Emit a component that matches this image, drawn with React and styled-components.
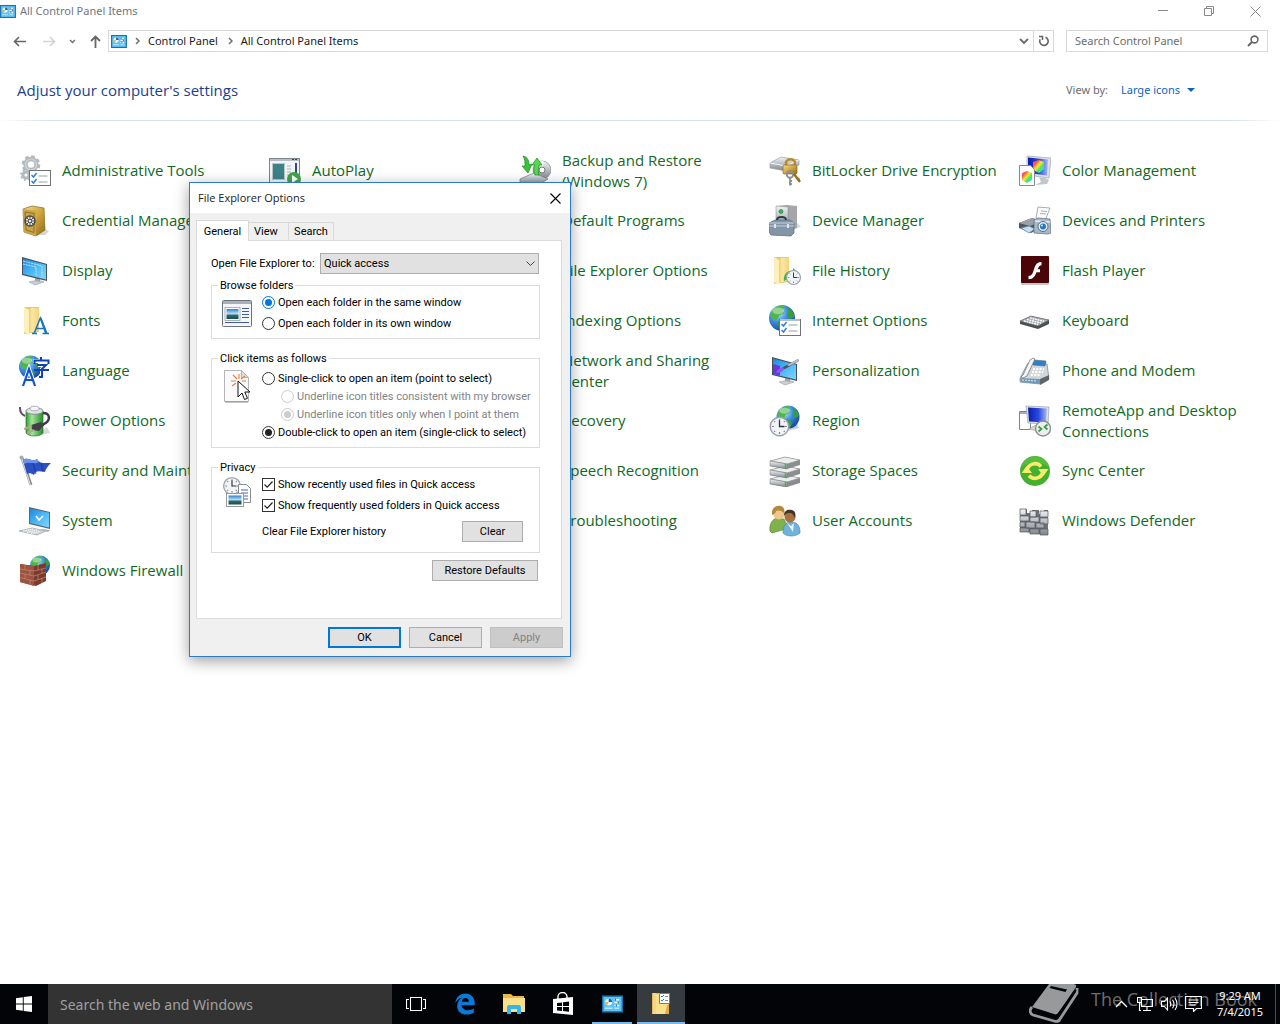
import React from "react";
import styled, { createGlobalStyle, css } from "styled-components";

const ui = `"Open Sans", "Noto Sans", sans-serif`;
const small = `"Noto Sans", "Open Sans", sans-serif`;
const classic = `Roboto, "Liberation Sans", Arial, sans-serif`;

const GlobalStyle = createGlobalStyle`
  *, *::before, *::after { box-sizing: border-box; }
  html, body { margin: 0; background: #fff; }
  body { font-family: ${ui}; font-size: 12px; line-height: 16px; color: #000; }
  button, input, select { font: inherit; color: inherit; margin: 0; }
  svg { display: block; flex: none; }
`;

/* ---------- shared gradients ---------- */

const HiddenSvg = styled.svg`
  position: absolute;
`;

const stops = (list) => list.map(([o, c]) => <stop key={o} offset={o} stopColor={c} />);

const Gradients = () => (
  <HiddenSvg width="0" height="0" aria-hidden="true">
    <defs>
      <radialGradient id="ocean" cx=".35" cy=".3" r=".8">
        {stops([[0, "#bfe6ff"], [0.45, "#3d8fe0"], [1, "#123a94"]])}
      </radialGradient>
      <linearGradient id="screen" x1="0" y1="0" x2="1" y2="1">
        {stops([[0, "#1d86dc"], [0.5, "#4bb8f6"], [1, "#7fd6ff"]])}
      </linearGradient>
      <linearGradient id="folder" x1="0" y1="0" x2="1" y2="0">
        {stops([[0, "#f0cd6a"], [0.3, "#fbe7a4"], [1, "#f3d679"]])}
      </linearGradient>
      <linearGradient id="steel" x1="0" y1="0" x2="0" y2="1">
        {stops([[0, "#f2f3f5"], [0.5, "#b9bdc3"], [1, "#7f848b"]])}
      </linearGradient>
      <linearGradient id="gold" x1="0" y1="0" x2="1" y2="1">
        {stops([[0, "#f3dc8b"], [0.5, "#cfa53c"], [1, "#8f6a1c"]])}
      </linearGradient>
      <linearGradient id="navy" x1="0" y1="0" x2="1" y2="0">
        {stops([[0, "#0a1ea8"], [0.55, "#2b49e0"], [1, "#a9b8f5"]])}
      </linearGradient>
      <linearGradient id="battery" x1="0" y1="0" x2="1" y2="0">
        {stops([[0, "#2f9a35"], [0.35, "#a4e69a"], [1, "#2b8a2f"]])}
      </linearGradient>
      <linearGradient id="rainbow" x1="0" y1="0" x2="1" y2="1">
        {stops([[0, "#ff3bd4"], [0.25, "#ff5a3a"], [0.45, "#ffe93a"], [0.65, "#45e65b"], [0.85, "#36d8ff"], [1, "#4a55ff"]])}
      </linearGradient>
      <linearGradient id="photo" x1="0" y1="0" x2="0" y2="1">
        {stops([[0, "#2e7fd0"], [0.5, "#bfe4f7"], [0.6, "#2d6f6a"], [1, "#1c4b52"]])}
      </linearGradient>
    </defs>
  </HiddenSvg>
);

/* ---------- drawing parts ---------- */

const Art = ({ children }) => (
  <svg width="32" height="32" viewBox="0 0 32 32" aria-hidden="true">{children}</svg>
);

const Globe = ({ cx, cy, r }) => (
  <g transform={`translate(${cx} ${cy}) scale(${r / 10})`}>
    <circle r="10" fill="url(#ocean)" />
    <path d="M-8.500-4C-6-9-1-10 2-9L0-6l2 2-4 2-2 4-3-1-2-3z" fill="#4fb648" />
    <path d="M4-8c3 1 5 4 5.500 7L6 1 4-2l1-3zM-4 3l4-1 4 3-2 4-3 0.800z" fill="#3a9d3c" />
    <ellipse cx="-3" cy="-5.500" rx="4.500" ry="2.600" fill="#fff" opacity=".4" />
  </g>
);

const Clock = ({ cx, cy, r }) => (
  <g transform={`translate(${cx} ${cy}) scale(${r / 10})`}>
    <circle r="9.300" fill="#f1f4f6" stroke="#9aa2a9" strokeWidth="1.500" />
    <path d="M0-7.500v2M0 5.500v2M-7.500 0h2M5.500 0h2M-5.300-5.300l1 1M5.300-5.300l-1 1M-5.300 5.300l1-1M5.300 5.300l-1-1" stroke="#7f8890" strokeWidth="1.200" />
    <path d="M0-6V0H5" fill="none" stroke="#2e353b" strokeWidth="1.300" />
  </g>
);

const FolderShape = () => (
  <g>
    <path d="M5 2h15v25l-15 2z" fill="#ecc867" />
    <path d="M5 2l5 3v25l-5-3z" fill="#fdf0bd" />
    <path d="M10 5l2-2h8v22l-3 1-7 2z" fill="url(#folder)" />
  </g>
);

const CheckList = ({ x, y, w, h }) => (
  <g>
    <rect x={x} y={y} width={w} height={h} fill="#fff" stroke="#6f7276" />
    <path d={`M${x + 2} ${y + 4.500}l2 2 3-4M${x + 2} ${y + 10.500}l2 2 3-4`} fill="none" stroke="#2f7fd6" strokeWidth="1.500" />
    <path d={`M${x + 9} ${y + 5.500}h${w - 12}M${x + 9} ${y + 11.500}h${w - 12}`} stroke="#9aa0a6" />
  </g>
);

const TiltedMonitor = ({ fill = "url(#screen)", children }) => (
  <g>
    <path d="M10 27l9-2 6 2-9 3z" fill="#c9ced3" stroke="#9aa0a6" strokeWidth=".6" />
    <path d="M16 22l5 1v4l-5-1z" fill="#a3a9af" />
    <path d="M3 2l25 7v17L3 20z" fill="#44505a" />
    <path d="M4 3.500l23 6.300v14.700L4 19z" fill={fill} />
    {children}
  </g>
);

/* ---------- control panel icons ---------- */

const AdminToolsIcon = () => (
  <Art>
    <g fill="none" stroke="#b4b9bf">
      <circle cx="12" cy="9.500" r="5.500" strokeWidth="4.400" />
      <circle cx="12" cy="9.500" r="8" strokeWidth="2.600" strokeDasharray="3.600 2.680" />
      <circle cx="7" cy="20" r="3" strokeWidth="3" />
      <circle cx="7" cy="20" r="5" strokeWidth="1.800" strokeDasharray="2 1.930" />
    </g>
    <circle cx="12" cy="9.500" r="5.500" fill="none" stroke="#d5d9dc" strokeWidth="1.200" />
    <CheckList x={10.5} y={15.500} w={21} h={15} />
  </Art>
);

const AutoPlayIcon = () => (
  <Art>
    <rect x=".5" y="3.500" width="30" height="26" fill="#f3f4f6" stroke="#7d848d" />
    <path d="M1 5h29" stroke="#b6bec8" strokeWidth="2" />
    <path d="M23 4.500h2M26 4.500h2" stroke="#444" />
    <rect x="3.500" y="8.500" width="12" height="16" fill="#3c8286" stroke="#b9c6cf" />
    <path d="M18 11h4M18 14h4M18 17h4M18 20h4" stroke="#a9b4c0" />
    <path d="M27 8v10" stroke="#2d4a86" strokeWidth="2" />
    <circle cx="25" cy="24" r="7" fill="#44a548" />
    <path d="M23 20l6 4-6 4z" fill="#fff" />
  </Art>
);

const BackupIcon = () => (
  <Art>
    <circle cx="23" cy="15" r="9" fill="url(#steel)" stroke="#85898f" strokeWidth=".7" />
    <path d="M23 15l-3-8.500a9 9 0 0 1 5-.300z" fill="#fff" opacity=".8" />
    <circle cx="23" cy="15" r="3" fill="#fff" stroke="#777" />
    <path d="M1 24l14-6 14 6-10 6H1z" fill="url(#steel)" stroke="#777c83" strokeWidth=".7" />
    <path d="M4 1c5 1 6 5 6 9l3-1-4 9-6-7h3c0-4 0-7-2-10z" fill="#3bc13c" stroke="#1b8a22" strokeWidth=".7" />
    <path d="M16 20c-2-5-1-8 0-10h-3l5-7 5 7h-3c-1 4-1 6 0 10z" fill="#56d94f" stroke="#1b8a22" strokeWidth=".7" />
  </Art>
);

const BitLockerIcon = () => (
  <Art>
    <path d="M1 8L12 2l18 3v5l-13 6L1 13z" fill="url(#steel)" stroke="#9b9fa4" strokeWidth=".7" />
    <path d="M1 8l16 3 13-6" fill="none" stroke="#f6f6f6" />
    <path d="M17 11V7a5 5 0 0 1 9 0v4" fill="none" stroke="#b88d26" strokeWidth="2.400" />
    <rect x="14" y="10" width="14" height="9" rx="1.500" fill="url(#gold)" stroke="#8f6a1c" strokeWidth=".7" />
    <circle cx="21" cy="19.500" r="3.200" fill="none" stroke="#8b8f94" strokeWidth="2" />
    <path d="M21 22v8.500M21 26h2M21 29h2" stroke="#8b8f94" strokeWidth="1.800" />
    <path d="M25 19l6 8M28 25l2.500-1.500" stroke="#98701a" strokeWidth="2.400" />
  </Art>
);

const ColorIcon = () => (
  <Art>
    <path d="M8 1l24 2-2 20-22-3z" fill="#dde1e5" stroke="#a4a9ae" strokeWidth=".7" />
    <path d="M9 2.500l20 2-1 16L9 18z" fill="url(#navy)" />
    <path d="M20 22l2 5-6 3 12-1 2-4-4-2z" fill="#c2c6ca" />
    <path d="M14 7l6-2 5 2v7l-5 4-6-3z" fill="url(#rainbow)" />
    <path d="M.5 10.500h11l4 4v16H.5z" fill="#fff" stroke="#85898e" />
    <path d="M3 18l5-2 5 2v7l-5 3-5-3z" fill="url(#rainbow)" />
  </Art>
);

const CredentialIcon = () => (
  <Art>
    <path d="M12 30l14 0 4-4-4-2z" fill="#d9d6cf" />
    <path d="M4 4l9-3 12 2 1 22-9 6L5 27z" fill="url(#gold)" stroke="#86651d" strokeWidth=".7" />
    <path d="M4 4l13 2v25L5 27z" fill="#c9a54a" />
    <path d="M6 7l9 1.500v19L7 25z" fill="none" stroke="#8f6f27" />
    <circle cx="11" cy="16" r="5" fill="#e3e3e3" stroke="#4a4a4a" strokeWidth="1.600" />
    <path d="M11 11v10M6 16h10M7.500 12.500l7 7M14.500 12.500l-7 7" stroke="#444" strokeWidth=".9" />
    <circle cx="11" cy="16" r="1.600" fill="#fff" stroke="#444" strokeWidth=".8" />
  </Art>
);

const DisplayIcon = () => (
  <Art>
    <TiltedMonitor>
      <path d="M4 9l13 3v9M4 6l19 5v12" fill="none" stroke="#c9efff" strokeWidth=".9" strokeDasharray="2 .8" />
    </TiltedMonitor>
  </Art>
);

const DeviceManagerIcon = () => (
  <Art>
    <path d="M24 24l8-2-4-4z" fill="#d9dadb" />
    <path d="M7 1l11-1 10 1v22l-9 3-12-1z" fill="#a3a6aa" />
    <path d="M7 1l12 1v23L7 24z" fill="url(#steel)" stroke="#888" strokeWidth=".5" />
    <circle cx="12" cy="6.500" r="2" fill="#39b54a" stroke="#1b7d2a" strokeWidth=".6" />
    <path d="M0 18l6-3h15l4 3v10l-3 3-20-1-2-3z" fill="#8296a8" stroke="#55687a" strokeWidth=".7" />
    <path d="M0 18h25M0 21h25" stroke="#c5d2dd" />
    <path d="M8 15c0-4 9-4 9 0" fill="none" stroke="#2f3b46" strokeWidth="2" />
    <path d="M6 19v4M19 19v4" stroke="#dfe7ee" strokeWidth="2" />
  </Art>
);

const DevicesIcon = () => (
  <Art>
    <path d="M19 2l12 1-5 13-9-3z" fill="#fbfbfb" stroke="#93989d" strokeWidth=".8" />
    <path d="M22 6l6 .5M21 8.500l6 .5" stroke="#a9aeb3" />
    <path d="M0 18l13-5 10 3v6L12 28 0 23z" fill="#50555b" />
    <path d="M0 18l13-5 10 3-12 5z" fill="#9aa0a6" />
    <path d="M2 23l8-2 6 3-6 4z" fill="#c4dff2" stroke="#5c84a6" strokeWidth=".7" />
    <path d="M15 15l4-2 12 1 1 14-3 1-14-1z" fill="#a8b8c9" stroke="#5d6b7b" strokeWidth=".7" />
    <path d="M16 16l15 1" stroke="#e6edf4" strokeWidth="1.500" />
    <circle cx="24" cy="21.500" r="5" fill="#e8eef4" stroke="#5b6d83" />
    <circle cx="24" cy="21.500" r="3" fill="#2476c8" />
    <circle cx="23" cy="20.500" r="1" fill="#d4ecff" />
  </Art>
);

const FileHistoryIcon = () => (
  <Art>
    <FolderShape />
    <path d="M15 26c-1-6 3-11 9-10v-3l6 5" fill="#45b549" />
    <Clock cx={24.5} cy={22.500} r={7.500} />
  </Art>
);

const FlashIcon = () => (
  <Art>
    <rect x="2" y="2" width="28" height="28" rx="1" fill="#c9c4c4" />
    <rect x="2" y="1" width="28" height="27" rx="1" fill="#4a0508" />
    <path d="M22.500 7c-6.500 0-6.800 6-8.200 9.500C13.200 19.300 12 21 9.500 21v3.200c5 0 6.700-3.600 8-7H21v-3h-2.300c1-2.500 1.800-4 3.800-4z" fill="#fff" />
  </Art>
);

const FontsIcon = () => (
  <Art>
    <FolderShape />
    <path d="M13 28.500h5M23.500 28.500h6.500M15.300 28l6-15 6 15M17.500 23.500h7.500" fill="none" stroke="#1a74c4" strokeWidth="1.500" />
    <path d="M20.800 13.500l5 14.500h2.700l-6-15.500z" fill="#1a74c4" />
  </Art>
);

const InternetIcon = () => (
  <Art>
    <Globe cx={13} cy={13} r={13} />
    <CheckList x={10.5} y={14.500} w={21} h={16} />
    <path d="M11 15h20" stroke="#b6bec7" strokeWidth="2" />
  </Art>
);

const KeyboardIcon = () => (
  <Art>
    <path d="M1 16L12 11l18 4v4L19 24 1 19z" fill="#4c4f53" />
    <path d="M1 16L12 11l18 4-11 6z" fill="#a9acb0" stroke="#66696d" strokeWidth=".6" />
    <path d="M5 16l14 3.500M8 14.500l14 3.500M11 13l14 3.300" stroke="#fff" strokeWidth="1.400" strokeDasharray="1.800 .8" />
  </Art>
);

const LanguageIcon = () => (
  <Art>
    <Globe cx={11.500} cy={12} r={11.500} />
    <g fill="none" stroke="#fff" strokeWidth="4"><path d="M14 6h16M19 10h8l-4 4v8" /></g>
    <path d="M22 2v3M15.500 9V5.500h14V9M18 10h9l-4 4v8h-3M15 15h15" fill="none" stroke="#0d41b8" strokeWidth="2" />
    <path d="M4 31l6-17 6 17M6 25h8" fill="none" stroke="#fff" strokeWidth="4" />
    <path d="M4 31l6-17 6 17M6 25h8" fill="none" stroke="#0d52d0" strokeWidth="2.200" />
  </Art>
);

const PersonalizationIcon = () => (
  <Art>
    <TiltedMonitor>
      <path d="M4 9l7 2v9.500L4 19z" fill="#6a35dc" />
      <path d="M10 15l4-3 15-8 1 2-14 8z" fill="#4d545b" />
      <path d="M18 10l11-6 1 2-10 5z" fill="#b9bec4" />
      <path d="M7 18c1-3 3-5 7-6l1 2c-2 3-4 4-8 4z" fill="#8a5be8" />
    </TiltedMonitor>
  </Art>
);

const PhoneIcon = () => (
  <Art>
    <path d="M1 23L9 8l19 1 2 15-9 5-20-2z" fill="#d5d8db" stroke="#878c92" strokeWidth=".8" />
    <path d="M1 23l20 1v5L2 27z" fill="#6f9ab6" />
    <path d="M3 25l14 1" stroke="#d9ecf7" strokeDasharray="2 1" />
    <path d="M21 24l9-4v5l-9 5z" fill="#5f6469" />
    <path d="M15 5l12 1-1 5-12-1z" fill="#2d80cc" stroke="#5e646a" strokeWidth=".6" />
    <path d="M4 20L11 5l3-2 2 1-8 17-4 2-2-1z" fill="#f4f5f6" stroke="#72777c" strokeWidth=".8" />
    <path d="M14 14h11M13 17h11M12 20h10" stroke="#fff" strokeWidth="1.800" strokeDasharray="2 1.300" />
  </Art>
);

const PowerIcon = () => (
  <Art>
    <path d="M17 31l14-3-3-6z" fill="#d6dbd6" />
    <path d="M7 6h17v22c-3 4-14 4-17 0z" fill="url(#battery)" stroke="#27762b" strokeWidth=".7" />
    <ellipse cx="15.500" cy="6" rx="8.500" ry="3.300" fill="#dfe3e6" stroke="#8b9094" />
    <ellipse cx="15.500" cy="3.500" rx="4.500" ry="2.300" fill="#f4f5f6" stroke="#8b9094" strokeWidth=".7" />
    <path d="M1 2c0 5 1 7 5 9" fill="none" stroke="#5f4a73" strokeWidth="2" />
    <path d="M24 8c7 0 7 6 4 9l-6 4" fill="none" stroke="#413450" strokeWidth="2.400" />
    <path d="M12 20l10-3 3 3-5 6-7-1z" fill="#3f4146" />
    <path d="M13 21l-8 3M15 25l-7 3" stroke="#b9a58a" strokeWidth="2" />
  </Art>
);

const RegionIcon = () => (
  <Art>
    <path d="M18 26l12-3-2-4z" fill="#b9cfe6" />
    <Globe cx={19} cy={12} r={11.500} />
    <Clock cx={10.5} cy={21.500} r={10} />
  </Art>
);

const RemoteAppIcon = () => (
  <Art>
    <path d="M.5 6.500h11v18H.5z" fill="#fff" stroke="#7d848d" />
    <path d="M1 8h10" stroke="#9fb0c4" strokeWidth="2" />
    <path d="M7 1l23 1-1 17-20-1z" fill="#dfe3e8" stroke="#9ba1a8" strokeWidth=".7" />
    <path d="M9 2.500l19 1-1 14-17-1z" fill="url(#navy)" />
    <path d="M10 24l7-4 5 2-4 4z" fill="#d8d6ca" stroke="#a09e92" strokeWidth=".6" />
    <circle cx="24" cy="23.500" r="7.500" fill="#eceeef" stroke="#8b9197" strokeWidth="1.400" />
    <path d="M19.500 21.500l3 2.500-3 2.500M28.500 19.500l-3 2.500 3 2.500" fill="none" stroke="#3a9d3c" strokeWidth="1.700" />
  </Art>
);

const FlagIcon = () => (
  <Art>
    <path d="M3 3l9 27" stroke="#85898f" strokeWidth="2.800" />
    <path d="M2.600 3l8.800 27" stroke="#e3e5e8" />
    <circle cx="2.500" cy="2.500" r="2" fill="#a7abb1" />
    <path d="M4 5c5-4 9 3 14-1 3 5 7 4 14 4-3 3-5 5-6 9-7-1-9-2-11 3-3-2-5-2-7-1z" fill="#2a50c4" />
    <path d="M4 5c5-4 9 3 14-1l2 3c-5 3-9-1-15 2z" fill="#6f92ec" />
    <path d="M14 8l3 11M22 8l2 8" stroke="#1b348f" strokeWidth="1.300" opacity=".6" />
  </Art>
);

const StorageIcon = () => (
  <Art>
    {[20, 11, 2].map((y) => (
      <g key={y} transform={`translate(0 ${y})`}>
        <path d="M1 4l15-4 15 3v5l-13 4-17-3z" fill="#8a8e93" />
        <path d="M1 4l15-4 15 3-13 4z" fill="#eceded" stroke="#888" strokeWidth=".6" />
        <path d="M1 4l17 3v5L1 9z" fill="url(#steel)" stroke="#777" strokeWidth=".5" />
        <path d="M16.500 7v4.500" stroke="#45b549" strokeWidth="1.600" />
      </g>
    ))}
  </Art>
);

const SyncIcon = () => (
  <Art>
    <circle cx="16" cy="16" r="15" fill="#43b02e" />
    <path d="M2 12a14.500 14.500 0 0 1 28 0c-8-6-20-6-28 0z" fill="#5cc043" opacity=".8" />
    <path d="M8 16a8 8 0 0 1 14-4.500M24 16a8 8 0 0 1-14 4.500" fill="none" stroke="#fbea6c" strokeWidth="3.600" />
    <path d="M2.500 18l5-7 5.500 7zM19 14l5.500 7 5-7z" fill="#fbea6c" />
  </Art>
);

const SystemIcon = () => (
  <Art>
    <path d="M0 26l13-3 14 3-9 4z" fill="#cfd4d9" stroke="#9ca1a6" strokeWidth=".7" />
    <path d="M4 26l10-2M8 27.500l10-2.500M12 28.500l9-2" stroke="#fff" strokeDasharray="1.500 .8" />
    <path d="M10 2l21 5v17l-21-5z" fill="#5c6770" />
    <path d="M11 3.500l19 4.300v14.700l-19-4.500z" fill="url(#screen)" />
    <path d="M17 11l3 4 4-4" fill="none" stroke="#fff" strokeWidth="1.500" />
    <path d="M23 24l8 1-2 2-8-2z" fill="#aeb4ba" />
  </Art>
);

const UsersIcon = () => (
  <Art>
    <path d="M1 26c-1-8 3-12 7-13l7 1 3 6-1 4-14 4z" fill="#7fb24a" stroke="#4f7d2b" strokeWidth=".6" />
    <circle cx="10" cy="8.500" r="6" fill="#efc68e" />
    <path d="M3 10c-1-8 5-10 9-9 3 1 4 4 3 7-3-3-6-3-8-2 0 2-2 3-4 4z" fill="#b28a3a" />
    <path d="M14 28c0-8 3-10 7-11l6 1c4 3 4 7 4 10-5 4-13 4-17 0z" fill="#6fb3dd" stroke="#3b7ca8" strokeWidth=".6" />
    <path d="M18 18l4 3 3-3-1 9z" fill="#e8f3fa" />
    <circle cx="21" cy="12" r="5.500" fill="#a9713f" />
    <path d="M15 11c0-6 4-7 8-6 3 1 4 3 3 8-2-4-3-5-6-5-2 0-4 1-5 3z" fill="#46342a" />
  </Art>
);

const DefenderIcon = () => (
  <Art>
    <path d="M1 4h7v4h5V5h7v4h5V5h4v23l-3 2-25-4z" fill="#6e7277" />
    <g fill="url(#steel)" stroke="#54585d" strokeWidth=".7">
      <path d="M1 4l6 0v6H1zM11 6h6v6h-6zM21 6h8v6h-8zM1 11h9v5H1zM11 12h9v5h-9zM21 13h8v6h-8zM1 17h5v5H1zM7 17h9v6H7zM17 18h8v5h-8zM1 23h9v4H1zM11 24h9v5h-9zM21 24h8v6h-8z" />
    </g>
  </Art>
);

const FirewallIcon = () => (
  <Art>
    <Globe cx={21} cy={10.500} r={10} />
    <path d="M1 9l14 2 12-3v18l-10 5-16-4z" fill="#7b3a2a" />
    <path d="M1 9l14 2v20L1 27z" fill="#9c5440" />
    <path d="M1 14l14 2 12-3M1 18l14 3 12-4M1 22.500l14 3.500 12-4M6 10v4.500M11 15v5M6 19v4.500M11 25v5M19 10v5M23 14v4M19 20v5M23 23v5" fill="none" stroke="#c08a76" strokeWidth=".7" />
  </Art>
);

const ClockIcon = () => (
  <Art><Clock cx={16} cy={16} r={15} /></Art>
);

const PlainFolderIcon = () => (
  <Art><FolderShape /></Art>
);

const CpGlyph = ({ width, height }) => (
  <svg width={width} height={height} viewBox="0 0 22 18" aria-hidden="true">
    <rect x=".75" y=".75" width="20.500" height="16.500" fill="#5cc3f5" stroke="#1b6fa8" strokeWidth="1.500" />
    <circle cx="7" cy="7" r="3.600" fill="#e6f6ff" />
    <path d="M7 7V3.400A3.600 3.600 0 0 1 10.600 7z" fill="#1660a5" />
    <path d="M7 7l-3.600 0a3.600 3.600 0 0 0 2 3.200z" fill="#f4a93b" />
    <path d="M13 4.500h5M13 7.500h5M13 10.500h5" stroke="#fff" strokeWidth="1.500" />
    <path d="M14 3.500v2M17 6.500v2M15 9.500v2" stroke="#1660a5" strokeWidth="1.200" />
    <path d="M3 13.500h8M13 13.500h5" stroke="#b9e6fb" strokeWidth="1.500" />
  </svg>
);

const items = [
  ["Administrative Tools", AdminToolsIcon],
  ["AutoPlay", AutoPlayIcon],
  ["Backup and Restore (Windows 7)", BackupIcon],
  ["BitLocker Drive Encryption", BitLockerIcon],
  ["Color Management", ColorIcon],
  ["Credential Manager", CredentialIcon],
  ["Date and Time", ClockIcon],
  ["Default Programs", SyncIcon],
  ["Device Manager", DeviceManagerIcon],
  ["Devices and Printers", DevicesIcon],
  ["Display", DisplayIcon],
  ["Ease of Access Center", ClockIcon],
  ["File Explorer Options", PlainFolderIcon],
  ["File History", FileHistoryIcon],
  ["Flash Player", FlashIcon],
  ["Fonts", FontsIcon],
  ["HomeGroup", PlainFolderIcon],
  ["Indexing Options", ClockIcon],
  ["Internet Options", InternetIcon],
  ["Keyboard", KeyboardIcon],
  ["Language", LanguageIcon],
  ["Mouse", KeyboardIcon],
  ["Network and Sharing Center", InternetIcon],
  ["Personalization", PersonalizationIcon],
  ["Phone and Modem", PhoneIcon],
  ["Power Options", PowerIcon],
  ["Programs and Features", StorageIcon],
  ["Recovery", SystemIcon],
  ["Region", RegionIcon],
  ["RemoteApp and Desktop Connections", RemoteAppIcon],
  ["Security and Maintenance", FlagIcon],
  ["Sound", StorageIcon],
  ["Speech Recognition", DisplayIcon],
  ["Storage Spaces", StorageIcon],
  ["Sync Center", SyncIcon],
  ["System", SystemIcon],
  ["Taskbar and Navigation", DisplayIcon],
  ["Troubleshooting", SystemIcon],
  ["User Accounts", UsersIcon],
  ["Windows Defender", DefenderIcon],
  ["Windows Firewall", FirewallIcon],
];

/* ---------- explorer window ---------- */

const Desktop = styled.div`
  position: relative;
  display: flex;
  flex-direction: column;
  min-height: 100vh;
`;

const Explorer = styled.main`
  flex: 1;
  background: #fff;
`;

const TitleBar = styled.header`
  display: flex;
  align-items: center;
  gap: 4px;
  height: 22px;
`;

const WindowTitle = styled.h1`
  flex: 1;
  margin: 0;
  font-family: ${small};
  font-size: 11px;
  font-weight: 400;
  color: #70767d;
`;

const CaptionButton = styled.button`
  display: grid;
  place-items: center;
  width: ${(p) => (p.$compact ? "30px" : "42px")};
  height: 20px;
  padding: 0;
  border: 0;
  background: transparent;
`;

const CaptionButtons = styled.div`
  display: flex;
  gap: 4px;
  padding-right: 4px;
`;

const NavRow = styled.div`
  display: flex;
  align-items: center;
  gap: 12px;
  padding: 8px 12px 8px 9px;
`;

const NavButtons = styled.nav`
  display: flex;
  align-items: center;
  gap: 10px;
  margin-right: -9px;
`;

const NavButton = styled.button`
  display: grid;
  place-items: center;
  width: ${(p) => (p.$small ? "6px" : "20px")};
  height: 20px;
  padding: 0;
  border: 0;
  background: transparent;
`;

const AddressBar = styled.div`
  flex: 1;
  display: flex;
  align-items: center;
  height: 22px;
  border: 1px solid #d9d9d9;
  padding-left: 2px;
`;

const Crumbs = styled.div`
  flex: 1;
  display: flex;
  align-items: center;
  gap: 8px;
`;

const Crumb = styled.a`
  padding-right: 2px;
  color: #1a1a1a;
  font-family: ${small};
  font-size: 11px;
  text-decoration: none;
`;

const AddressButton = styled.button`
  display: grid;
  place-items: center;
  width: 20px;
  height: 20px;
  padding: 0;
  border: 0;
  border-left: 1px solid ${(p) => (p.$divided ? "#d9d9d9" : "transparent")};
  background: transparent;
`;

const SearchBox = styled.label`
  display: flex;
  align-items: center;
  width: 202px;
  height: 22px;
  padding: 0 8px;
  border: 1px solid #d9d9d9;
`;

const SearchInput = styled.input`
  flex: 1;
  min-width: 0;
  padding: 0;
  border: 0;
  outline: 0;
  background: transparent;
  font-family: ${small};
  font-size: 11px;
  &::placeholder { color: #6d6d6d; opacity: 1; }
`;

const Heading = styled.div`
  display: flex;
  align-items: center;
  height: 60px;
  padding: 0 85px 0 17px;
`;

const HeadingText = styled.h2`
  flex: 1;
  margin: 0;
  font-size: 15px;
  font-weight: 400;
  line-height: 20px;
  color: #1c3f8c;
`;

const ViewLabel = styled.label`
  display: flex;
  align-items: center;
  gap: 13px;
  font-family: ${small};
  font-size: 11px;
  color: #6d6d6d;
`;

const ViewPicker = styled.span`
  display: flex;
  align-items: center;
  gap: 6px;
`;

const ViewSelect = styled.select`
  appearance: none;
  padding: 0;
  border: 0;
  background: transparent;
  color: #0a63be;
`;

const Divider = styled.hr`
  height: 1px;
  margin: 0 0 25px;
  border: 0;
  background: linear-gradient(90deg, #fff, #d5dfe8 4%, #d5dfe8 96%, #fff);
`;

const ItemGrid = styled.ul`
  display: grid;
  grid-template-columns: repeat(auto-fill, 230px);
  grid-auto-rows: 50px;
  column-gap: 20px;
  margin: 0;
  padding: 0 11px 0 19px;
  list-style: none;
`;

const ItemLink = styled.a`
  display: flex;
  align-items: center;
  gap: 11px;
  height: 49px;
  font-size: 15px;
  line-height: 21px;
  color: #14691f;
  text-decoration: none;
`;

/* ---------- dialog ---------- */

const Dialog = styled.section`
  position: absolute;
  top: 182px;
  left: 189px;
  width: 382px;
  border: 1px solid #2b7cc4;
  background: #f0f0f0;
  box-shadow: 0 4px 14px rgba(0, 0, 0, 0.38);
  font-family: ${classic};
  font-size: 11px;
  line-height: 13px;
`;

const DialogBar = styled.header`
  display: flex;
  align-items: center;
  justify-content: space-between;
  height: 30px;
  padding-left: 8px;
  background: #fff;
`;

const DialogTitle = styled.h2`
  margin: 0;
  font-family: ${ui};
  font-size: 11px;
  font-weight: 400;
  line-height: 16px;
  color: #222;
`;

const DialogBody = styled.div`
  padding: 7px 7px 8px 6px;
`;

const Tabs = styled.div`
  display: flex;
  align-items: flex-end;
  height: 20px;
`;

const Tab = styled.button`
  position: relative;
  width: ${(p) => p.$width};
  padding: 0 5px;
  border: 1px solid #d9d9d9;
  border-bottom: 0;
  background: #f0f0f0;
  height: 18px;
  text-align: ${(p) => p.$align || "center"};
  & + & { border-left: 0; }
  ${(p) => p.$selected && css`
    z-index: 1;
    height: 21px;
    margin-bottom: -1px;
    background: #fff;
  `}
`;

const TabPage = styled.div`
  margin-right: 1px;
  padding: 12px 21px 37px 14px;
  border: 1px solid #dcdcdc;
  background: #fff;
`;

const FieldRow = styled.label`
  display: flex;
  align-items: center;
  justify-content: space-between;
  margin-bottom: 5px;
  padding-right: 1px;
`;

const SelectWrap = styled.span`
  position: relative;
  width: 219px;
  svg { position: absolute; top: 7px; right: 4px; pointer-events: none; }
`;

const Select = styled.select`
  appearance: none;
  display: block;
  width: 100%;
  height: 21px;
  padding: 0 3px;
  border: 1px solid #adadad;
  border-radius: 0;
  background: #e1e1e1;
`;

const Group = styled.fieldset`
  min-width: 0;
  margin: 0 0 13px;
  padding: 0 10px;
  border: 1px solid #dcdcdc;
  &:last-of-type { margin-bottom: 7px; }
`;

const Legend = styled.legend`
  margin-left: -4px;
  padding: 0 2px;
`;

const GroupBody = styled.div`
  display: flex;
  align-items: flex-start;
  gap: 10px;
  padding: ${(p) => (p.$roomy ? "4px 0 6px" : "1px 0 6px")};
  > svg { margin-top: ${(p) => (p.$lowIcon ? "6px" : "0")}; }
`;

const Options = styled.div`
  flex: 1;
  display: flex;
  flex-direction: column;
  gap: ${(p) => (p.$tight ? "0" : "3px")};
`;

const Option = styled.label`
  display: flex;
  align-items: center;
  gap: 3px;
  height: 18px;
  padding-left: ${(p) => (p.$nested ? "19px" : "0")};
  color: ${(p) => (p.$muted ? "#838383" : "#000")};
  white-space: nowrap;
`;

const Radio = styled.input.attrs({ type: "radio" })`
  appearance: none;
  display: grid;
  place-items: center;
  width: 13px;
  height: 13px;
  border: 1px solid ${(p) => (p.$accent ? "#0078d7" : "#333")};
  border-radius: 50%;
  background: #fff;
  &:disabled { border-color: #ccc; }
  &:checked::after {
    content: "";
    width: 7px;
    height: 7px;
    border-radius: 50%;
    background: ${(p) => (p.$accent ? "#0078d7" : "#222")};
  }
  &:checked:disabled::after { background: #ccc; }
`;

const CheckWrap = styled.span`
  display: grid;
  > * { grid-area: 1 / 1; }
  svg { pointer-events: none; }
`;

const Check = styled.input.attrs({ type: "checkbox" })`
  appearance: none;
  width: 13px;
  height: 13px;
  border: 1px solid #333;
  background: #fff;
`;

const ClearRow = styled.div`
  display: flex;
  align-items: center;
  justify-content: space-between;
  margin: 4px 6px 4px 0;
`;

const PushButton = styled.button`
  width: ${(p) => p.$width || "73px"};
  height: 21px;
  padding: 0;
  border: ${(p) => (p.$primary ? "2px solid #0078d7" : "1px solid #adadad")};
  background: #e1e1e1;
  &:disabled { border-color: #bfbfbf; background: #ccc; color: #838383; }
`;

const RightAlign = styled.div`
  display: flex;
  justify-content: flex-end;
  padding-right: 2px;
`;

const DialogFooter = styled.footer`
  display: flex;
  justify-content: flex-end;
  gap: 8px;
  margin-top: 8px;
`;

const Checkbox = ({ children }) => (
  <Option>
    <CheckWrap>
      <Check defaultChecked />
      <svg width="13" height="13" viewBox="0 0 13 13" aria-hidden="true">
        <path d="M2.500 6.500l2.700 2.700L10.500 3.500" fill="none" stroke="#222" strokeWidth="1.200" />
      </svg>
    </CheckWrap>
    {children}
  </Option>
);

const OptionsDialog = () => (
  <Dialog role="dialog" aria-labelledby="dialog-title">
    <DialogBar>
      <DialogTitle id="dialog-title">File Explorer Options</DialogTitle>
      <CaptionButton $compact aria-label="Close dialog">
        <svg width="11" height="11" viewBox="0 0 11 11"><path d="M.5.5l10 10M10.500.5l-10 10" stroke="#000" strokeWidth="1.100" /></svg>
      </CaptionButton>
    </DialogBar>
    <DialogBody>
      <Tabs role="tablist">
        <Tab role="tab" aria-selected="true" $selected $width="53px">General</Tab>
        <Tab role="tab" $width="40px" $align="left">View</Tab>
        <Tab role="tab" $width="45px">Search</Tab>
      </Tabs>
      <TabPage role="tabpanel">
        <FieldRow>
          Open File Explorer to:
          <SelectWrap>
            <Select defaultValue="quick"><option value="quick">Quick access</option></Select>
            <svg width="9" height="7" viewBox="0 0 9 7"><path d="M.5 1.500l4 4 4-4" fill="none" stroke="#444" /></svg>
          </SelectWrap>
        </FieldRow>

        <Group>
          <Legend>Browse folders</Legend>
          <GroupBody $lowIcon>
            <svg width="30" height="30" viewBox="0 0 30 30" aria-hidden="true">
              <rect x=".5" y="1.500" width="29" height="26" rx="1" fill="#f4f5f7" stroke="#6d737b" />
              <path d="M1 3.500h28" stroke="#a9b0b9" strokeWidth="3" />
              <rect x="3" y="8.500" width="15" height="13" fill="#fff" stroke="#9aa1a9" strokeWidth=".8" />
              <rect x="4.500" y="10" width="12" height="10" fill="url(#photo)" />
              <path d="M20 9.500h7M20 12.500h7M20 15.500h7M20 18.500h7M3 23.500h24" stroke="#3e5ba6" />
            </svg>
            <Options>
              <Option><Radio name="browse" defaultChecked $accent />Open each folder in the same window</Option>
              <Option><Radio name="browse" />Open each folder in its own window</Option>
            </Options>
          </GroupBody>
        </Group>

        <Group>
          <Legend>Click items as follows</Legend>
          <GroupBody $roomy>
            <svg width="30" height="34" viewBox="0 0 30 34" aria-hidden="true">
              <path d="M2.500 1.500h17l7 7v24h-24z" fill="#fafafa" stroke="#b5b5b5" />
              <path d="M19.500 1.500v7h7z" fill="#dcdcdc" stroke="#b5b5b5" />
              <path d="M3 33h23" stroke="#8a8a8a" />
              <path d="M17 10V5M19 10l4-3M15 10l-4-4M14 12h-5M14 14l-4 3M20 12h4" stroke="#f07848" strokeWidth="1.100" />
              <path d="M16 12v16l4-4 2.500 6.500 3-1.200-2.700-6.300h5.200z" fill="#fff" stroke="#111" />
            </svg>
            <Options $tight>
              <Option><Radio name="click" />Single-click to open an item (point to select)</Option>
              <Option $nested $muted><Radio name="underline" disabled />Underline icon titles consistent with my browser</Option>
              <Option $nested $muted><Radio name="underline" disabled defaultChecked />Underline icon titles only when I point at them</Option>
              <Option><Radio name="click" defaultChecked />Double-click to open an item (single-click to select)</Option>
            </Options>
          </GroupBody>
        </Group>

        <Group>
          <Legend>Privacy</Legend>
          <GroupBody>
            <svg width="30" height="34" viewBox="0 0 30 34" aria-hidden="true">
              <Clock cx={10} cy={11} r={9} />
              <path d="M16.500 9.500h8l4 4v14h-12z" fill="#fff" stroke="#878c92" />
              <path d="M19 15h7M19 18h7M19 21h7M19 24h7" stroke="#4668b0" />
              <rect x="4.500" y="18.500" width="17" height="13" fill="#fff" stroke="#999" />
              <rect x="6.500" y="20.500" width="13" height="9" fill="url(#photo)" />
            </svg>
            <Options>
              <Checkbox>Show recently used files in Quick access</Checkbox>
              <Checkbox>Show frequently used folders in Quick access</Checkbox>
              <ClearRow>
                Clear File Explorer history
                <PushButton $width="61px">Clear</PushButton>
              </ClearRow>
            </Options>
          </GroupBody>
        </Group>

        <RightAlign><PushButton $width="106px">Restore Defaults</PushButton></RightAlign>
      </TabPage>
      <DialogFooter>
        <PushButton $primary>OK</PushButton>
        <PushButton>Cancel</PushButton>
        <PushButton disabled>Apply</PushButton>
      </DialogFooter>
    </DialogBody>
  </Dialog>
);

/* ---------- taskbar ---------- */

const Taskbar = styled.footer`
  position: relative;
  display: flex;
  height: 40px;
  background: #020408;
  color: #fff;
`;

const TaskButton = styled.button`
  position: relative;
  display: grid;
  place-items: center;
  width: 48px;
  height: 40px;
  padding: 0;
  border: 0;
  background: ${(p) => (p.$active ? "#363b40" : "transparent")};
  ${(p) => (p.$active || p.$running) && css`
    &::after {
      content: "";
      position: absolute;
      bottom: 0;
      left: ${p.$active ? "0" : "4px"};
      right: ${p.$active ? "0" : "4px"};
      height: 2px;
      background: #76b9ed;
    }
  `}
`;

const TaskSearch = styled.input`
  width: 344px;
  height: 40px;
  padding: 0 12px;
  border: 0;
  border-radius: 0;
  outline: 0;
  background: #333;
  font-family: ${small};
  font-size: 14px;
  &::placeholder { color: #a0a0a0; opacity: 1; }
`;

const TaskButtons = styled.div`
  flex: 1;
  display: flex;
  gap: 1px;
`;

const Watermark = styled.div`
  position: absolute;
  top: 0;
  right: 23px;
  display: flex;
  align-items: center;
  gap: 11px;
  height: 40px;
  font-size: 18px;
  line-height: 20px;
  color: #6c6e70;
  pointer-events: none;
`;

const WatermarkText = styled.span`
  padding-bottom: 10px;
`;

const Tray = styled.div`
  position: relative;
  display: flex;
  align-items: center;
  gap: 8px;
`;

const TrayButton = styled.button`
  display: grid;
  place-items: center;
  width: 16px;
  height: 40px;
  padding: 0;
  border: 0;
  background: transparent;
`;

const TrayClock = styled.time`
  width: 62px;
  margin-right: 4px;
  font-family: ${small};
  font-size: 11px;
  line-height: 16px;
  text-align: center;
`;

const ShowDesktop = styled.button`
  width: 5px;
  height: 40px;
  margin-left: -8px;
  padding: 0;
  border: 0;
  border-left: 1px solid #4a4c4e;
  background: transparent;
`;

const Chevron = ({ color = "#6d6d6d", d = "M1 1l3 3-3 3", w = 5, h = 8, stroke = 1.5 }) => (
  <svg width={w} height={h} viewBox={`0 0 ${w} ${h}`} aria-hidden="true">
    <path d={d} fill="none" stroke={color} strokeWidth={stroke} />
  </svg>
);

export default function App() {
  return (
    <Desktop>
      <GlobalStyle />
      <Gradients />
      <Explorer>
        <TitleBar>
          <CpGlyph width={16} height={13} />
          <WindowTitle>All Control Panel Items</WindowTitle>
          <CaptionButtons>
            <CaptionButton aria-label="Minimize">
              <svg width="10" height="10" viewBox="0 0 10 10"><path d="M0 4.500h10" stroke="#888" /></svg>
            </CaptionButton>
            <CaptionButton aria-label="Restore">
              <svg width="10" height="10" viewBox="0 0 10 10"><path d="M.5 2.500h7v7h-7zM2.500 2.500v-2h7v7h-2" fill="none" stroke="#888" /></svg>
            </CaptionButton>
            <CaptionButton aria-label="Close">
              <svg width="11" height="11" viewBox="0 0 11 11"><path d="M.5.5l10 10M10.500.5l-10 10" stroke="#888" /></svg>
            </CaptionButton>
          </CaptionButtons>
        </TitleBar>

        <NavRow>
          <NavButtons aria-label="History">
            <NavButton aria-label="Back">
              <svg width="13" height="11" viewBox="0 0 13 11"><path d="M13 5.500H1.500M6 1L1.500 5.500 6 10" fill="none" stroke="#666" strokeWidth="1.600" /></svg>
            </NavButton>
            <NavButton aria-label="Forward">
              <svg width="13" height="11" viewBox="0 0 13 11"><path d="M0 5.500h11.500M7 1l4.500 4.500L7 10" fill="none" stroke="#d3d3d3" strokeWidth="1.600" /></svg>
            </NavButton>
            <NavButton $small aria-label="Recent locations">
              <Chevron w={7} h={5} d="M1 1l2.500 2.500L6 1" stroke={1.400} />
            </NavButton>
            <NavButton aria-label="Up">
              <svg width="11" height="13" viewBox="0 0 11 13"><path d="M5.500 13V1.500M1 6l4.500-4.500L10 6" fill="none" stroke="#666" strokeWidth="1.800" /></svg>
            </NavButton>
          </NavButtons>
          <AddressBar>
            <Crumbs>
              <CpGlyph width={16} height={13} />
              <Chevron />
              <Crumb href="#control-panel">Control Panel</Crumb>
              <Chevron />
              <Crumb href="#all-items">All Control Panel Items</Crumb>
            </Crumbs>
            <AddressButton aria-label="Previous locations">
              <Chevron w={10} h={7} d="M1 1l4 4 4-4" stroke={1.900} />
            </AddressButton>
            <AddressButton $divided aria-label="Refresh">
              <svg width="11" height="12" viewBox="0 0 11 12"><path d="M7.500 2.300A4.200 4.200 0 1 1 2.200 4.300M1 1.500h3.500V5" fill="none" stroke="#666" strokeWidth="1.600" /></svg>
            </AddressButton>
          </AddressBar>
          <SearchBox>
            <SearchInput type="search" placeholder="Search Control Panel" aria-label="Search Control Panel" />
            <svg width="12" height="12" viewBox="0 0 12 12"><circle cx="7.500" cy="4.500" r="3.400" fill="none" stroke="#666" strokeWidth="1.600" /><path d="M5 7L1 11" stroke="#666" strokeWidth="2" /></svg>
          </SearchBox>
        </NavRow>

        <Heading>
          <HeadingText>Adjust your computer's settings</HeadingText>
          <ViewLabel>
            View by:
            <ViewPicker>
              <ViewSelect defaultValue="large"><option value="large">Large icons</option></ViewSelect>
              <svg width="8" height="4" viewBox="0 0 8 4"><path d="M0 0h8L4 4z" fill="#0a63be" /></svg>
            </ViewPicker>
          </ViewLabel>
        </Heading>
        <Divider />

        <ItemGrid>
          {items.map(([name, Icon]) => (
            <li key={name}>
              <ItemLink href={`#${name.toLowerCase().replace(/\W+/g, "-")}`}>
                <Icon />
                <span>{name}</span>
              </ItemLink>
            </li>
          ))}
        </ItemGrid>
      </Explorer>

      <OptionsDialog />

      <Taskbar>
        <TaskButton aria-label="Start">
          <svg width="16" height="16" viewBox="0 0 16 16"><path d="M0 2.200L6.800 1.200V7.500H0zM7.700 1.100L16 0v7.500H7.700zM0 8.500h6.800v6.300L0 13.800zM7.700 8.500H16V16l-8.300-1.100z" fill="#fff" /></svg>
        </TaskButton>
        <TaskSearch type="search" placeholder="Search the web and Windows" aria-label="Search the web and Windows" />
        <TaskButtons>
          <TaskButton aria-label="Task view">
            <svg width="20" height="14" viewBox="0 0 20 14"><path d="M4.500.5h11v13h-11zM3 2.500H.5v9H3M17 2.500h2.500v9H17" fill="none" stroke="#fff" strokeWidth="1.100" /></svg>
          </TaskButton>
          <TaskButton aria-label="Microsoft Edge">
            <svg width="20" height="22" viewBox="0 0 20 22"><path d="M.3 10C1 4 5 .5 10.300.5 16.500.5 19.700 5 19.700 10v2.300H6.600c.2 3.400 3 5 6.200 5 2.300 0 4.200-.6 6-1.700v4.200c-2 1.200-4.500 1.800-7.300 1.800C5.700 21.600 2.200 18.200 2.200 13c0-3.800 2-6.800 5.300-8.500C4.500 5 2 7 .3 10zM6.800 8.700h7.100C13.900 6.500 12.700 5 10.500 5 8.400 5 7.100 6.600 6.800 8.700z" fill="#0a7ad8" /></svg>
          </TaskButton>
          <TaskButton aria-label="File Explorer">
            <svg width="22" height="20" viewBox="0 0 22 20"><path d="M0 0h8l2 2h11v15H0z" fill="#e9b949" /><path d="M0 4h22v14H0z" fill="#fbe08c" /><path d="M4 20v-7c0-1 1-2 2-2h10c1 0 2 1 2 2v7h-4v-5H8v5z" fill="#35b5e8" /></svg>
          </TaskButton>
          <TaskButton aria-label="Store">
            <svg width="22" height="24" viewBox="0 0 22 24"><path d="M6 7V5.500a4.500 4.500 0 0 1 9-1V7" fill="none" stroke="#fff" strokeWidth="1.400" /><path d="M1 7l20-2v18l-20-2z" fill="#fff" /><path d="M5 11l5-.6V14H5zM11 10.300l6-.7V14h-6zM5 15h5v4l-5-.6zM11 15h6v4.800l-6-.7z" fill="#020408" /></svg>
          </TaskButton>
          <TaskButton $running aria-label="Control Panel"><CpGlyph width={21} height={18} /></TaskButton>
          <TaskButton $active aria-label="File Explorer Options">
            <svg width="20" height="24" viewBox="0 0 20 24"><path d="M1 1h14l3 9v12H1z" fill="#e6bd58" /><path d="M2 1h3v21H2z" fill="#f5d684" /><path d="M5 2h12v20H5z" fill="#fbe08c" /><path d="M16 13h2v9h-4z" fill="#dcae43" /><path d="M8.500 1.500h10v10h-10z" fill="#fff" stroke="#7a8087" /><path d="M10 4l1 1 2-2M10 8l1 1 2-2" fill="none" stroke="#2a78d0" /><path d="M14 4.500h3M14 8.500h3" stroke="#8a8f95" /></svg>
          </TaskButton>
        </TaskButtons>
        <Watermark>
          <svg width="51" height="40" viewBox="0 0 51 40" aria-hidden="true">
            <path d="M20 0h24c2 0 4 1 3 3L30 28c-1 2-3 3-5 2L3 23z" fill="#98999b" />
            <path d="M22 2l16 3.500-1.500 2.500-16-4z" fill="#020408" />
            <path d="M3 23c-3 3-2 7 1 8l21 6c3 1 5 0 6-2L48 9V4" fill="none" stroke="#98999b" strokeWidth="2.800" />
            <path d="M4 26.500l22 6 3-2L47 6" fill="none" stroke="#020408" strokeWidth="1.800" />
          </svg>
          <WatermarkText>The Collection Book</WatermarkText>
        </Watermark>
        <Tray>
          <TrayButton aria-label="Show hidden icons"><Chevron w={13} h={8} d="M1 7l5.500-5.500L12 7" color="#fff" stroke={1.300} /></TrayButton>
          <TrayButton aria-label="Network">
            <svg width="16" height="14" viewBox="0 0 16 14"><path d="M5 2.500h10.500v7H4.500V6M10 10v3M6 13.500h8M.5.500h4v5h-4zM2.500 6v7.500H4" fill="none" stroke="#fff" strokeWidth="1.100" /></svg>
          </TrayButton>
          <TrayButton aria-label="Volume">
            <svg width="17" height="14" viewBox="0 0 17 14"><path d="M.5 4.500h3l3-3.500v12l-3-3.500h-3zM9 4.500q1.500 2.500 0 5M11.500 2.700q3 4.300 0 8.600M14 1q4 6 0 12" fill="none" stroke="#fff" strokeWidth="1.100" /></svg>
          </TrayButton>
          <TrayButton aria-label="Notifications">
            <svg width="17" height="16" viewBox="0 0 17 16"><path d="M.5.500h16v12h-5l-3 3v-3h-8zM3.500 4h10M3.500 6.500h10M3.500 9h7" fill="none" stroke="#fff" strokeWidth="1.100" /></svg>
          </TrayButton>
          <TrayClock>9:29 AM<br />7/4/2015</TrayClock>
          <ShowDesktop aria-label="Show desktop" />
        </Tray>
      </Taskbar>
    </Desktop>
  );
}
